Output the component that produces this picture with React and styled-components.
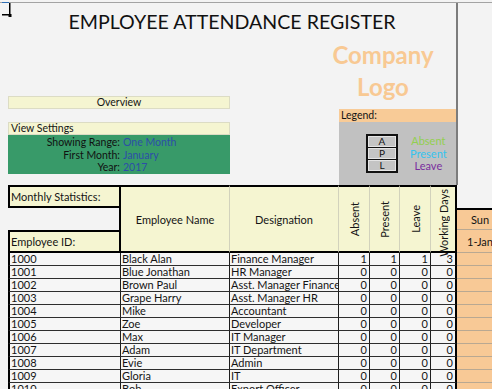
import styled, { createGlobalStyle } from 'styled-components';

const GlobalStyle = createGlobalStyle`
  html, body {
    margin: 0;
    padding: 0;
    background: #f3f3f3;
    overflow: hidden;
  }
  body {
    font-family: Lato, "Liberation Sans", sans-serif;
    font-size: 11px;
    color: #141414;
  }
`;

const Sheet = styled.div`
  position: relative;
  width: 492px;
  height: 389px;
  padding-top: 2px;
  box-sizing: border-box;
  overflow: hidden;
`;

const Handle = styled.svg`
  position: absolute;
  left: 0;
  top: 0;
`;

const Top = styled.div`
  display: flex;
  height: 183px;
  border-top: 1px solid #a3a3a3;
  box-sizing: border-box;
`;

const Main = styled.div`
  width: 456px;
  padding-left: 8px;
  box-sizing: border-box;
  display: flex;
  flex-direction: column;
`;

const Strip = styled.div`
  flex: 1;
  border-left: 2px solid #7c7c7c;
`;

const Title = styled.h1`
  margin: 0;
  height: 36px;
  padding-top: 7px;
  box-sizing: border-box;
  text-align: center;
  font-weight: 400;
  font-size: 19.6px;
  line-height: 24px;
  color: #111;
`;

const Panels = styled.div`
  display: flex;
  justify-content: space-between;
  flex: 1;
`;

const LeftCol = styled.div`
  width: 222px;
  padding-top: 57px;
  display: flex;
  flex-direction: column;
`;

const YellowBar = styled.div`
  height: 13px;
  box-sizing: border-box;
  background: #f5f5d1;
  border: 1px solid #dcdcc4;
  font-size: 10.5px;
  line-height: 11px;
  padding: 0 2px;
  text-align: ${(p) => p.$align || 'left'};
  margin-top: ${(p) => p.$gap || 0}px;
`;

const Settings = styled.div`
  height: 39px;
  background: #389a69;
  padding-top: 1px;
  box-sizing: border-box;
`;

const SettingRow = styled.div`
  display: grid;
  grid-template-columns: 112px 1fr;
  column-gap: 3px;
  height: 12.5px;
  line-height: 12.5px;
  font-size: 10.5px;
`;

const SettingLabel = styled.span`
  text-align: right;
  color: #111;
`;

const SettingValue = styled.span`
  color: #2c4ea8;
`;

const RightCol = styled.div`
  width: 117px;
  display: flex;
  flex-direction: column;
`;

const Logo = styled.div`
  height: 70px;
  margin-left: -29px;
  text-align: center;
  font-size: 24px;
  font-weight: 700;
  line-height: 32px;
  color: #f8c993;
  white-space: nowrap;
`;

const LegendHead = styled.div`
  height: 13px;
  background: #f8cb97;
  font-size: 10.5px;
  line-height: 13px;
  padding-left: 2px;
`;

const LegendBody = styled.div`
  flex: 1;
  background: #c1c1c1;
  display: flex;
  align-items: flex-start;
  padding: 12px 0 0 27px;
  gap: 12px;
`;

const Keys = styled.div`
  width: 32px;
  box-sizing: border-box;
  background: #111;
  padding: 2px;
  display: flex;
  flex-direction: column;
  gap: 1px;
`;

const Key = styled.div`
  height: 11px;
  box-sizing: border-box;
  background: #c4c4c4;
  border: 1px solid #e4e4e4;
  text-align: center;
  font-size: 10px;
  line-height: 9px;
`;

const Labels = styled.div`
  display: flex;
  flex-direction: column;
  padding-top: 1px;
`;

const Label = styled.div`
  height: 12.5px;
  line-height: 12.5px;
  text-align: center;
  font-size: 11px;
  color: ${(p) => p.$color};
`;

const Table = styled.div`
  display: grid;
  grid-template-columns: 113px 109px 109px 31px 30px 31px 26px 45px;
  grid-template-rows: 23px 22px 23px;
  grid-auto-rows: 13px;
  margin-left: 8px;
`;

const HeadCell = styled.div`
  box-sizing: border-box;
  background: ${(p) => (p.$empty ? 'transparent' : '#f5f5d1')};
  border-top: ${(p) => (p.$top ? '2px solid #000' : 'none')};
  border-bottom: ${(p) => (p.$bottom ? '2px solid #000' : 'none')};
  border-left: ${(p) => (p.$left ? '2px solid #000' : 'none')};
  border-right: ${(p) => (p.$thick ? '2px solid #000' : '1px solid #d2d2bc')};
  grid-row: ${(p) => p.$row || 'auto'};
  display: flex;
  align-items: center;
  justify-content: ${(p) => (p.$center ? 'center' : 'flex-start')};
  padding-left: ${(p) => (p.$center ? 0 : 1)}px;
  font-size: 11px;
`;

const Rotated = styled.span`
  writing-mode: vertical-rl;
  transform: rotate(180deg);
  white-space: nowrap;
  margin-top: ${(p) => p.$shift || 0}px;
`;

const SunCell = styled.div`
  box-sizing: border-box;
  background: #f8c996;
  border-top: ${(p) => (p.$top ? '2px solid #000' : 'none')};
  border-bottom: 1px solid #b9a892;
  display: flex;
  align-items: center;
  justify-content: center;
  padding-left: 1px;
`;

const Cell = styled.div`
  box-sizing: border-box;
  background: #f6f6f6;
  border-bottom: 1px solid #2e2e2e;
  border-left: ${(p) => (p.$first ? '2px solid #000' : 'none')};
  border-right: ${(p) => (p.$thick ? '2px solid #000' : '1px solid #1e1e1e')};
  padding: 0 ${(p) => (p.$num ? 2 : 1)}px;
  text-align: ${(p) => (p.$num ? 'right' : 'left')};
  line-height: 12px;
  font-size: 11px;
  white-space: nowrap;
  overflow: hidden;
`;

const employees = [
  ['1000', 'Black Alan', 'Finance Manager', [1, 1, 1, 3]],
  ['1001', 'Blue Jonathan', 'HR Manager', [0, 0, 0, 0]],
  ['1002', 'Brown Paul', 'Asst. Manager Finance', [0, 0, 0, 0]],
  ['1003', 'Grape Harry', 'Asst. Manager HR', [0, 0, 0, 0]],
  ['1004', 'Mike', 'Accountant', [0, 0, 0, 0]],
  ['1005', 'Zoe', 'Developer', [0, 0, 0, 0]],
  ['1006', 'Max', 'IT Manager', [0, 0, 0, 0]],
  ['1007', 'Adam', 'IT Department', [0, 0, 0, 0]],
  ['1008', 'Evie', 'Admin', [0, 0, 0, 0]],
  ['1009', 'Gloria', 'IT', [0, 0, 0, 0]],
  ['1010', 'Bob', 'Export Officer', [0, 0, 0, 0]],
];

const App = () => {
  return (
    <Sheet>
      <GlobalStyle />
      <Handle width="14" height="18" viewBox="0 0 14 18">
        <rect x="2" y="2" width="7" height="1" fill="#2f6fb6" />
        <rect x="9" y="3" width="1.5" height="13" fill="#000" />
        <rect x="2" y="14" width="8" height="1.5" fill="#000" />
        <rect x="8.5" y="14" width="3" height="3" fill="#000" />
      </Handle>
      <Top>
        <Main>
          <Title>EMPLOYEE ATTENDANCE REGISTER</Title>
          <Panels>
            <LeftCol>
              <YellowBar $align="center">Overview</YellowBar>
              <YellowBar $gap={13}>View Settings</YellowBar>
              <Settings>
                <SettingRow>
                  <SettingLabel>Showing Range:</SettingLabel>
                  <SettingValue>One Month</SettingValue>
                </SettingRow>
                <SettingRow>
                  <SettingLabel>First Month:</SettingLabel>
                  <SettingValue>January</SettingValue>
                </SettingRow>
                <SettingRow>
                  <SettingLabel>Year:</SettingLabel>
                  <SettingValue>2017</SettingValue>
                </SettingRow>
              </Settings>
            </LeftCol>
            <RightCol>
              <Logo>
                Company
                <br />
                Logo
              </Logo>
              <LegendHead>Legend:</LegendHead>
              <LegendBody>
                <Keys>
                  <Key>A</Key>
                  <Key>P</Key>
                  <Key>L</Key>
                </Keys>
                <Labels>
                  <Label $color="#93cf4f">Absent</Label>
                  <Label $color="#35c4ef">Present</Label>
                  <Label $color="#7a2e9e">Leave</Label>
                </Labels>
              </LegendBody>
            </RightCol>
          </Panels>
        </Main>
        <Strip />
      </Top>
      <Table>
        <HeadCell $row="1" $top $bottom $left $thick>Monthly Statistics:</HeadCell>
        <HeadCell $row="1 / 4" $top $bottom $center>Employee Name</HeadCell>
        <HeadCell $row="1 / 4" $top $bottom $center>Designation</HeadCell>
        <HeadCell $row="1 / 4" $top $bottom $center>
          <Rotated>Absent</Rotated>
        </HeadCell>
        <HeadCell $row="1 / 4" $top $bottom $center>
          <Rotated>Present</Rotated>
        </HeadCell>
        <HeadCell $row="1 / 4" $top $bottom $center>
          <Rotated>Leave</Rotated>
        </HeadCell>
        <HeadCell $row="1 / 4" $top $bottom $center $thick>
          <Rotated $shift={8}>Working Days</Rotated>
        </HeadCell>
        <HeadCell $row="1" $empty />
        <HeadCell $row="2" $empty $thick style={{ gridColumn: 1 }} />
        <SunCell $top style={{ gridColumn: 8, gridRow: 2 }}>Sun</SunCell>
        <HeadCell $row="3" $top $bottom $left $thick style={{ gridColumn: 1 }}>Employee ID:</HeadCell>
        <SunCell style={{ gridColumn: 8, gridRow: 3 }}>1-Jan</SunCell>
        {employees.map(([id, name, role, stats]) => [
          <Cell key={`${id}-id`} $first>{id}</Cell>,
          <Cell key={`${id}-name`}>{name}</Cell>,
          <Cell key={`${id}-role`}>{role}</Cell>,
          ...stats.map((n, i) => (
            <Cell key={`${id}-s${i}`} $num $thick={i === 3}>{n}</Cell>
          )),
          <SunCell key={`${id}-sun`} />,
        ])}
      </Table>
    </Sheet>
  );
};

export default App;
